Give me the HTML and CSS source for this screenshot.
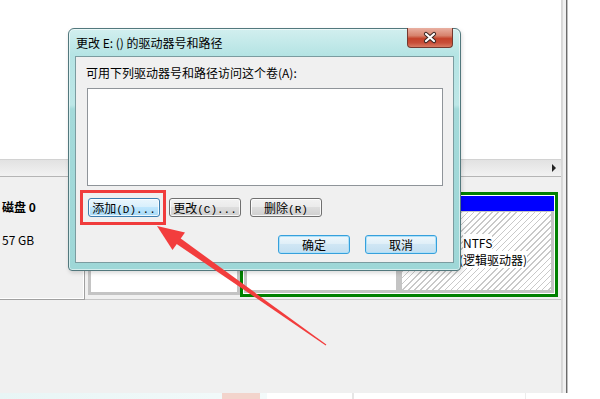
FILE: index.html
```html
<!DOCTYPE html>
<html lang="zh-CN">
<head>
  <meta charset="UTF-8">
  <title>更改驱动器号和路径</title>
  <link rel="stylesheet" href="styles.css">
</head>
<body>
  <div class="screen">
    <div class="console">
      <div class="main">
        <div class="volumes"></div>
        <div class="hscroll"><span class="scroll-right"></span></div>
        <div class="disks">
          <div class="disk-row">
            <div class="disk-label">
              <div class="disk-name">磁盘 0</div>
              <div class="disk-size">57 GB</div>
            </div>
            <div class="disk-bar">
              <div class="part primary">
                <div class="part-head"></div>
                <div class="part-body"></div>
              </div>
              <div class="extended">
                <div class="part">
                  <div class="part-head"></div>
                  <div class="part-body"></div>
                </div>
                <div class="part selected">
                  <div class="part-head"></div>
                  <div class="part-body">
                    <span class="fs">NTFS</span>
                    <span class="kind">(逻辑驱动器)</span>
                  </div>
                </div>
              </div>
            </div>
          </div>
        </div>
      </div>
      <div class="edge"></div>
    </div>
    <div class="ghost">
      <div class="ghost-title"><span class="ghost-close"></span></div>
      <div class="ghost-rest"></div>
    </div>
  </div>

  <div class="dialog">
    <div class="titlebar">
      <span class="title">更改 E: () 的驱动器号和路径</span>
      <span class="close">
        <svg width="46" height="19" viewBox="0 0 46 19">
          <path d="M20 6 L28 13 M28 6 L20 13" stroke="#3a2622" stroke-width="4.2" stroke-linecap="round"/>
          <path d="M20 6 L28 13 M28 6 L20 13" stroke="#ffffff" stroke-width="2.2" stroke-linecap="round"/>
        </svg>
      </span>
    </div>
    <div class="client">
      <div class="prompt">可用下列驱动器号和路径访问这个卷(A):</div>
      <div class="listbox"></div>
      <div class="actions">
        <button class="btn hot">添加<span class="hw">(D)...</span></button>
        <button class="btn">更改<span class="hw">(C)...</span></button>
        <button class="btn">删除<span class="hw">(R)</span></button>
      </div>
      <div class="confirm">
        <button class="btn def">确定</button>
        <button class="btn def">取消</button>
      </div>
    </div>
  </div>

  <div class="callout"></div>

  <svg class="pointer" width="600" height="399" viewBox="0 0 600 399">
    <polygon points="173,241.5 177,235.8 326.3,344.6 325.7,345.4" fill="#f23d3d"/>
    <polygon points="157,226 185,232.5 172.5,250" fill="#f23d3d"/>
  </svg>
</body>
</html>
```

FILE: styles.css
```css
body {
  margin: 0;
  width: 600px;
  height: 399px;
  overflow: hidden;
  position: relative;
  background: #ffffff;
  font-family: "Noto Sans CJK SC", "Liberation Sans", sans-serif;
  font-size: 12px;
  color: #000000;
}

.screen {
  display: flex;
  flex-direction: column;
  height: 399px;
}

.console {
  display: flex;
  height: 393px;
}

.main {
  width: 562px;
  box-sizing: border-box;
  border-right: 1px solid #d6d6d6;
  display: flex;
  flex-direction: column;
  background: #f0f0f0;
}

.volumes {
  height: 159px;
  background: #ffffff;
}

.hscroll {
  height: 18px;
  box-sizing: border-box;
  border-top: 1px solid #d2d2d2;
  border-bottom: 1px solid #b5b5b5;
  background: linear-gradient(180deg, #e2e2e2, #f2f2f2);
  display: flex;
  justify-content: flex-end;
  align-items: center;
  padding-right: 5px;
}

.scroll-right {
  width: 0;
  height: 0;
  border-left: 4px solid #222222;
  border-top: 4px solid transparent;
  border-bottom: 4px solid transparent;
}

.disks {
  flex: 1;
  padding-top: 6px;
}

.disk-row {
  display: flex;
  height: 117px;
}

.disk-label {
  width: 85px;
  box-sizing: border-box;
  border-right: 1px solid #a0a0a0;
  border-bottom: 1px solid #a0a0a0;
  box-shadow: inset -1px -1px 0 #ffffff;
  padding: 16px 0 0 2px;
}

.disk-name {
  font-weight: bold;
  line-height: 16px;
}

.disk-size {
  margin-top: 17px;
  line-height: 16px;
}

.disk-bar {
  flex: 1;
  box-sizing: border-box;
  padding: 9px 3px 2px;
  border-bottom: 1px solid #c6c6c6;
  display: flex;
}

.part {
  flex: 1;
  display: flex;
  flex-direction: column;
}

.part.primary {
  flex: none;
  width: 152px;
  margin: 3px 0 2px;
}

.part-head {
  height: 15px;
  background: #0000ff;
}

.part-body {
  flex: 1;
  border: 3px solid #c4c4c4;
  border-top-width: 1px;
  background: #ffffff;
}

.extended {
  width: 318px;
  box-sizing: border-box;
  border: 3px solid #008000;
  padding: 1px;
  background: #ffffff;
  display: flex;
}

.selected .part-body {
  background: repeating-linear-gradient(135deg, #ffffff 0 3.2px, #c9c9c9 3.2px 4.3px);
  padding-top: 22px;
  display: flex;
  flex-direction: column;
  align-items: flex-start;
}

.selected .part-body span {
  line-height: 17px;
  background: #ffffff;
  white-space: nowrap;
}

.selected .fs {
  margin-left: 61px;
}

.selected .kind {
  margin-left: 57px;
}

.edge {
  width: 6px;
  background: linear-gradient(90deg, #d9d9d9 0 1px, #f0f0f0 1px 4px, #6b6b6b 4px 5px, #c0c0c0 5px 6px);
}

.ghost {
  display: flex;
  height: 6px;
  overflow: hidden;
}

.ghost-title {
  width: 267px;
  box-sizing: border-box;
  padding-right: 7px;
  display: flex;
  background: linear-gradient(90deg, #e8f5f5, #f3fafa);
}

.ghost-close {
  margin-left: auto;
  width: 38px;
  background: #f3d4cc;
}

.ghost-rest {
  flex: 1;
  background: linear-gradient(90deg, transparent 85px, #e6e6e6 85px 87px, transparent 87px 258px, #ececec 258px 259px, transparent 259px);
}

/* dialog */

.dialog {
  position: absolute;
  left: 68px;
  top: 28px;
  width: 393px;
  height: 243px;
  box-sizing: border-box;
  border: 1px solid #52787d;
  border-radius: 6px 6px 4px 4px;
  padding: 0 6px 7px;
  display: flex;
  flex-direction: column;
  background: linear-gradient(180deg, #d2efef 0, #b5e4e4 26px, #bde7e7 76px, #a4dada 80px, #9ed7d7 100%);
  box-shadow: inset 0 0 0 1px rgba(255, 255, 255, 0.55), 1px 2px 4px rgba(0, 0, 0, 0.15);
}

.titlebar {
  flex: none;
  height: 27px;
  display: flex;
  align-items: flex-start;
}

.title {
  margin: 7px 0 0 1px;
  line-height: 14px;
  white-space: nowrap;
}

.close {
  margin: -1px 1px 0 auto;
  width: 46px;
  height: 20px;
  box-sizing: border-box;
  border: 1px solid #74392f;
  border-top: 0;
  border-radius: 0 0 4px 4px;
  background: linear-gradient(180deg, #e9b0a2 0%, #d7836d 40%, #c4422a 56%, #c84e38 78%, #d97b62 100%);
  display: flex;
  align-items: center;
  justify-content: center;
}

.close svg {
  margin-left: -2px;
}

.client {
  flex: 1;
  border: 1px solid #7b9ca0;
  background: #f0f0f0;
}

.prompt {
  margin: 9px 0 0 10px;
  line-height: 14px;
  white-space: nowrap;
}

.listbox {
  margin: 8px 10px 0 11px;
  height: 98px;
  box-sizing: border-box;
  border: 1px solid #8f9499;
  background: #ffffff;
}

.actions {
  display: flex;
  gap: 9px;
  margin: 12px 0 0 12px;
}

.confirm {
  display: flex;
  justify-content: flex-end;
  gap: 15px;
  margin: 18px 16px 0 0;
}

.btn {
  width: 72px;
  height: 19px;
  box-sizing: border-box;
  padding: 0;
  border: 1px solid #707070;
  border-radius: 3px;
  font-family: "Noto Sans CJK SC", sans-serif;
  font-size: 12px;
  line-height: 17px;
  color: #000000;
  white-space: nowrap;
  background: linear-gradient(180deg, #f2f2f2 0%, #ebebeb 45%, #dddddd 50%, #cfcfcf 100%);
  box-shadow: inset 0 0 0 1px rgba(255, 255, 255, 0.8);
}

.btn.hot {
  border-color: #3c7fb1;
  background: linear-gradient(180deg, #eaf6fd 0%, #d9f0fc 45%, #bee6fd 50%, #a7d9f5 100%);
}

.btn.def {
  border-color: #36a0dc;
  background: linear-gradient(180deg, #eef7fc 0%, #e0eff8 45%, #cfe6f4 50%, #c3dff1 100%);
  box-shadow: inset 0 0 0 1px #aee0f8;
}

.hw {
  font-family: "Liberation Mono", monospace;
  font-size: 11px;
}

/* annotation */

.callout {
  position: absolute;
  left: 80px;
  top: 190px;
  width: 86px;
  height: 35px;
  box-sizing: border-box;
  border: 3px solid #f03c3c;
}

.pointer {
  position: absolute;
  left: 0;
  top: 0;
  pointer-events: none;
}
```
